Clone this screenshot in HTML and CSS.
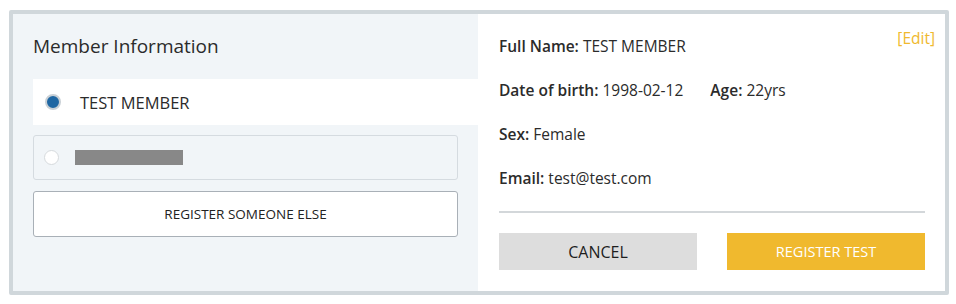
FILE: index.html
```html
<!DOCTYPE html>
<html lang="en">
<head>
    <meta charset="UTF-8">
    <title>Member Information</title>
    <link rel="stylesheet" href="styles.css">
</head>
<body>

    <div class="card">
        <div class="members">
            <h2>Member Information</h2>

            <label class="member selected">
                <span class="radio"></span>
                TEST MEMBER
            </label>
            <label class="member">
                <span class="radio"></span>
                <span class="redacted"></span>
            </label>

            <button class="btn-else">REGISTER SOMEONE ELSE</button>
        </div>

        <div class="details">
            <a class="edit" href="#">[Edit]</a>
            <p><b>Full Name:</b> TEST MEMBER</p>
            <p><b>Date of birth:</b> 1998-02-12 <b class="age">Age:</b> 22yrs</p>
            <p><b>Sex:</b> Female</p>
            <p><b>Email:</b> test@test.com</p>

            <div class="actions">
                <button class="btn-cancel">CANCEL</button>
                <button class="btn-register">REGISTER TEST</button>
            </div>
        </div>
    </div>

</body>
</html>
```

FILE: styles.css
```css
body {
    font-family: "Open Sans", Lato, sans-serif;
    margin: 10px 7px 9px 9px;
    background-color: #fff;
    color: #333;
}
.card {
    display: flex;
    border: 4px solid #d0d7db;
    border-radius: 2px;
    height: 277px;
}
.members {
    width: 445px;
    padding: 20px 0 0 20px;
    background-color: #f1f5f8;
}
.members h2 {
    font-size: 19px;
    font-weight: 400;
    margin: 0 0 21px;
    color: #2b2b2b;
    line-height: 24px;
}
.member {
    display: flex;
    align-items: center;
    gap: 19px;
    height: 45px;
    padding-left: 12px;
    font-size: 16.5px;
    color: #2b2b2b;
    box-sizing: border-box;
}
.member.selected {
    background-color: #fff;
    height: 46px;
    margin-bottom: 10px;
}
.member:not(.selected) {
    width: 425px;
    border: 1px solid #d5dbe0;
    border-radius: 3px;
    padding-left: 10px;
    gap: 16px;
    margin-bottom: 11px;
}
.radio {
    flex: none;
    width: 15px;
    height: 15px;
    border-radius: 50%;
    background-color: #fff;
    border: 1px solid #d6dadd;
    box-sizing: border-box;
}
.selected .radio {
    background-color: #1f67a3;
    border: 2px solid #c9d0d6;
    width: 16px;
    height: 16px;
}
.redacted {
    width: 108px;
    height: 15px;
    background-color: #888;
}
.btn-else {
    display: block;
    width: 425px;
    height: 46px;
    background-color: #fff;
    border: 1px solid #a9b0b7;
    border-radius: 3px;
    font-family: inherit;
    font-size: 13.5px;
    color: #222;
}
.details {
    position: relative;
    flex: 1;
    padding: 22px 20px 0 21px;
    background-color: #fff;
}
.edit {
    position: absolute;
    top: 13px;
    right: 10px;
    font-size: 15.5px;
    color: #f0b92e;
    text-decoration: none;
}
.details p {
    margin: 0 0 24px;
    font-size: 15.5px;
    line-height: 20px;
    color: #2b2b2b;
}
.details b {
    font-weight: 600;
}
.details .age {
    margin-left: 23px;
}
.actions {
    display: flex;
    justify-content: space-between;
    border-top: 2px solid #d3d7da;
    margin-top: -1px;
    padding-top: 20px;
}
.actions button {
    width: 198px;
    height: 37px;
    border: none;
    font-family: inherit;
}
.btn-cancel {
    background-color: #dddddd;
    color: #1e1e1e;
    font-size: 16px;
}
.btn-register {
    background-color: #f0b92e;
    color: #fff;
    font-size: 14.5px;
}
```
